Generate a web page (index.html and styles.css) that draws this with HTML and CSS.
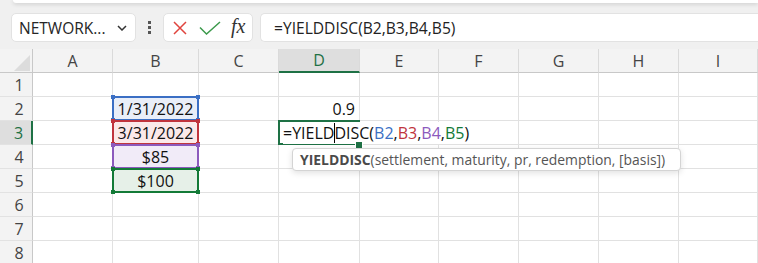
FILE: index.html
```html
<!DOCTYPE html>
<html lang="en">
<head>
    <meta charset="UTF-8">
    <meta name="viewport" content="width=device-width, initial-scale=1.0">
    <title>YIELDDISC</title>
    <link rel="stylesheet" href="styles.css">
</head>
<body>
    <div class="ribbon-edge"></div>

    <div class="formula-row">
        <div class="name-box">
            <span>NETWORK...</span>
            <svg class="chevron" width="10" height="6" viewBox="0 0 10 6"><path d="M1 1 L5 5 L9 1" fill="none" stroke="#333" stroke-width="1.5"/></svg>
        </div>
        <div class="grip"><i></i><i></i><i></i></div>
        <div class="fx-box">
            <svg width="16" height="16" viewBox="0 0 16 16"><path d="M2 2 L14 14 M14 2 L2 14" stroke="#e0443e" stroke-width="1.5" fill="none"/></svg>
            <svg width="22" height="14" viewBox="0 0 22 14"><path d="M1 6.5 L7.5 13 L21 1" stroke="#3c9a4c" stroke-width="1.5" fill="none"/></svg>
            <span class="fx">fx</span>
        </div>
        <div class="formula-bar">=YIELDDISC(B2,B3,B4,B5)</div>
    </div>

    <div class="sheet">
        <div class="corner"><span class="tri"></span></div>
        <div class="col-head">A</div>
        <div class="col-head">B</div>
        <div class="col-head">C</div>
        <div class="col-head active">D</div>
        <div class="col-head">E</div>
        <div class="col-head">F</div>
        <div class="col-head">G</div>
        <div class="col-head">H</div>
        <div class="col-head">I</div>

        <div class="row-head">1</div>
        <div class="cell"></div><div class="cell"></div><div class="cell"></div><div class="cell"></div><div class="cell"></div><div class="cell"></div><div class="cell"></div><div class="cell"></div><div class="cell"></div>

        <div class="row-head">2</div>
        <div class="cell"></div>
        <div class="cell center ref ref-blue">1/31/2022<i class="h tl"></i><i class="h tr"></i><i class="h bl"></i><i class="h br"></i></div>
        <div class="cell"></div>
        <div class="cell right">0.9</div>
        <div class="cell"></div><div class="cell"></div><div class="cell"></div><div class="cell"></div><div class="cell"></div>

        <div class="row-head active">3</div>
        <div class="cell"></div>
        <div class="cell center ref ref-red">3/31/2022<i class="h tl"></i><i class="h tr"></i><i class="h bl"></i><i class="h br"></i></div>
        <div class="cell"></div>
        <div class="cell editing">
            <span class="edit-text">=YIELD<span class="caret"></span>DISC(<span class="c-blue">B2</span>,<span class="c-red">B3</span>,<span class="c-purple">B4</span>,<span class="c-green">B5</span>)</span>
            <i class="fill-handle"></i>
        </div>
        <div class="cell"></div><div class="cell"></div><div class="cell"></div><div class="cell"></div><div class="cell"></div>

        <div class="row-head">4</div>
        <div class="cell"></div>
        <div class="cell center ref ref-purple">$85<i class="h tl"></i><i class="h tr"></i><i class="h bl"></i><i class="h br"></i></div>
        <div class="cell"></div><div class="cell"></div><div class="cell"></div><div class="cell"></div><div class="cell"></div><div class="cell"></div><div class="cell"></div>

        <div class="row-head">5</div>
        <div class="cell"></div>
        <div class="cell center ref ref-green">$100<i class="h tl"></i><i class="h tr"></i><i class="h bl"></i><i class="h br"></i></div>
        <div class="cell"></div><div class="cell"></div><div class="cell"></div><div class="cell"></div><div class="cell"></div><div class="cell"></div><div class="cell"></div>

        <div class="row-head">6</div>
        <div class="cell"></div><div class="cell"></div><div class="cell"></div><div class="cell"></div><div class="cell"></div><div class="cell"></div><div class="cell"></div><div class="cell"></div><div class="cell"></div>

        <div class="row-head">7</div>
        <div class="cell"></div><div class="cell"></div><div class="cell"></div><div class="cell"></div><div class="cell"></div><div class="cell"></div><div class="cell"></div><div class="cell"></div><div class="cell"></div>

        <div class="row-head">8</div>
        <div class="cell"></div><div class="cell"></div><div class="cell"></div><div class="cell"></div><div class="cell"></div><div class="cell"></div><div class="cell"></div><div class="cell"></div><div class="cell"></div>

        <div class="tooltip"><b>YIELDDISC</b>(settlement, maturity, pr, redemption, [basis])</div>
    </div>
</body>
</html>
```

FILE: styles.css
```css
/* Excel-like formula editing view */
body {
    margin: 0;
    width: 758px;
    height: 263px;
    overflow: hidden;
    background-color: #f0f0f0;
    font-family: "Open Sans", "Noto Sans", sans-serif;
    color: #222;
}

.ribbon-edge {
    height: 3px;
    margin-left: 13px;
    background-color: #fff;
    border-bottom-left-radius: 6px;
    box-shadow: 0 1px 4px rgba(0, 0, 0, 0.18);
}

.formula-row {
    display: flex;
    align-items: stretch;
    height: 29px;
    margin-top: 10px;
    padding-left: 11px;
}

.name-box {
    width: 125px;
    box-sizing: border-box;
    display: flex;
    align-items: center;
    justify-content: space-between;
    padding: 0 8px 0 7px;
    background-color: #fff;
    border: 1px solid #e2e2e2;
    border-radius: 5px;
    font-size: 15.5px;
    color: #262626;
}

.grip {
    width: 27px;
    display: flex;
    flex-direction: column;
    align-items: center;
    justify-content: center;
    gap: 2px;
}

.grip i {
    display: block;
    width: 3px;
    height: 3px;
    background-color: #555;
}

.fx-box {
    width: 90px;
    box-sizing: border-box;
    display: flex;
    align-items: center;
    gap: 11px;
    padding-left: 8px;
    background-color: #fff;
    border: 1px solid #e2e2e2;
    border-radius: 5px;
}

.fx {
    font-family: "Liberation Serif", serif;
    font-style: italic;
    font-size: 20px;
    color: #333;
    margin-left: -1px;
    margin-top: -3px;
}

.formula-bar {
    flex: 1;
    margin-left: 7px;
    display: flex;
    align-items: center;
    padding-left: 13px;
    background-color: #fff;
    border: 1px solid #e2e2e2;
    border-right: none;
    border-radius: 5px 0 0 5px;
    font-size: 15.6px;
    color: #222;
}

.sheet {
    position: relative;
    margin-top: 7px;
    display: grid;
    grid-template-columns: 33px 80px 86px 80px 81px 79px 80px 80px 80px 79px;
    grid-auto-rows: 24px;
    background-color: #fff;
}

.corner,
.col-head,
.row-head {
    box-sizing: border-box;
    background-color: #f3f3f3;
    color: #444;
    font-size: 16px;
    display: flex;
    align-items: center;
}

.corner {
    position: relative;
    border-right: 1px solid #c8c8c8;
    border-bottom: 1px solid #c8c8c8;
}

.tri {
    position: absolute;
    right: 2px;
    bottom: 1px;
    width: 0;
    height: 0;
    border-left: 16px solid transparent;
    border-bottom: 16px solid #dcdcdc;
}

.col-head {
    justify-content: center;
    border-right: 1px solid #dadada;
    border-bottom: 1px solid #c8c8c8;
}

.row-head {
    justify-content: center;
    padding-left: 6px;
    border-right: 1px solid #c8c8c8;
    border-bottom: 1px solid #e2e2e2;
}

.col-head.active {
    background-color: #dedede;
    color: #1e7145;
    border-bottom: 2px solid #1e7145;
}

.row-head.active {
    background-color: #dedede;
    color: #1e7145;
    border-right: 2px solid #1e7145;
}

.cell {
    position: relative;
    box-sizing: border-box;
    border-right: 1px solid #e1e1e1;
    border-bottom: 1px solid #e1e1e1;
    font-family: "Open Sans", sans-serif;
    font-size: 16px;
    color: #111;
    display: flex;
    align-items: flex-end;
    padding: 0 4px 0;
    white-space: nowrap;
}

.center {
    justify-content: center;
}

.right {
    justify-content: flex-end;
}

/* coloured reference ranges */
.ref::after {
    content: "";
    position: absolute;
    left: -1px;
    top: -1px;
    right: -1px;
    bottom: -1px;
    border: 2px solid var(--ref);
    pointer-events: none;
}

.ref .h {
    position: absolute;
    width: 4px;
    height: 4px;
    background-color: var(--ref);
    z-index: 2;
}

.h.tl { left: -2px; top: -2px; }
.h.tr { right: -2px; top: -2px; }
.h.bl { left: -2px; bottom: -2px; }
.h.br { right: -2px; bottom: -2px; }

.ref-blue { --ref: #3b6fc4; background-color: #e9eef8; z-index: 1; }
.ref-red { --ref: #c0343d; background-color: #fbe9e9; z-index: 2; }
.ref-purple { --ref: #8c5abd; background-color: #f1ebf8; z-index: 3; }
.ref-green { --ref: #137a37; background-color: #e6f0e8; z-index: 4; }

.editing {
    z-index: 5;
    overflow: visible;
}

.editing::after {
    content: "";
    position: absolute;
    left: -1px;
    top: -1px;
    right: -1px;
    bottom: -1px;
    border: 2px solid #1e7145;
}

.edit-text {
    position: relative;
    z-index: 1;
    background-color: #fff;
    padding-right: 4px;
}

.caret {
    display: inline-block;
    width: 1px;
    height: 20px;
    margin: 0 -0.5px -4px;
    background-color: #000;
}

.c-blue { color: #3b6fc4; }
.c-red { color: #c0343d; }
.c-purple { color: #8c5abd; }
.c-green { color: #137a37; }

.fill-handle {
    position: absolute;
    right: -4px;
    bottom: -5px;
    width: 6px;
    height: 6px;
    background-color: #1e7145;
    border: 1px solid #fff;
    z-index: 2;
}

.tooltip {
    position: absolute;
    left: 292px;
    top: 99px;
    width: 389px;
    height: 23px;
    box-sizing: border-box;
    padding-left: 7px;
    display: flex;
    align-items: center;
    background-color: #fff;
    border: 1px solid #d4d4d4;
    border-radius: 4px;
    box-shadow: 0 2px 6px rgba(0, 0, 0, 0.12);
    font-size: 13.9px;
    color: #555;
    white-space: nowrap;
    z-index: 10;
}

.tooltip b {
    color: #4a4a4a;
}
```
